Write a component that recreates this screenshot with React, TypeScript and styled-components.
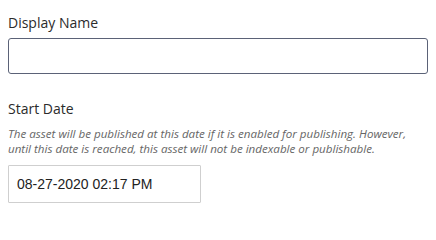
import React from "react";
import styled, { createGlobalStyle } from "styled-components";

const Global = createGlobalStyle`
  html, body { margin: 0; padding: 0; background: #ffffff; }
  body { font-family: "Open Sans", "Liberation Sans", sans-serif; }
  * { box-sizing: border-box; }
`;

const Form = styled.div`
  display: flex;
  flex-direction: column;
  padding: 13px 8px 0 8px;
`;

const Field = styled.div<{ $gap?: number }>`
  display: flex;
  flex-direction: column;
  margin-bottom: ${(p) => p.$gap ?? 0}px;
`;

const Label = styled.label<{ $gap?: number }>`
  font-family: "Open Sans", sans-serif;
  font-size: 14px;
  line-height: 20px;
  color: #2b2b2b;
  margin-bottom: ${(p) => p.$gap ?? 0}px;
`;

const Help = styled.p`
  margin: 7px 0 9px 0;
  font-family: "Open Sans", sans-serif;
  font-style: italic;
  font-size: 11.6px;
  line-height: 15px;
  color: #666666;
`;

const TextInput = styled.input<{ $width?: string; $variant?: "focus" | "plain" }>`
  width: ${(p) => p.$width ?? "100%"};
  height: ${(p) => (p.$variant === "focus" ? 36 : 38)}px;
  border: 1px solid ${(p) => (p.$variant === "focus" ? "#5b6277" : "#cfcfcf")};
  border-radius: ${(p) => (p.$variant === "focus" ? 3 : 1)}px;
  padding: 0 8px;
  font-family: "Liberation Sans", Arial, sans-serif;
  font-size: 14px;
  color: #222222;
  background: #ffffff;
  outline: none;
`;

export default function App() {
  return (
    <>
      <Global />
      <Form>
        <Field $gap={25}>
          <Label $gap={5}>Display Name</Label>
          <TextInput $variant="focus" />
        </Field>
        <Field>
          <Label>Start Date</Label>
          <Help>
            The asset will be published at this date if it is enabled for publishing. However,
            until this date is reached, this asset will not be indexable or publishable.
          </Help>
          <TextInput $variant="plain" $width="193px" defaultValue="08-27-2020 02:17 PM" />
        </Field>
      </Form>
    </>
  );
}
